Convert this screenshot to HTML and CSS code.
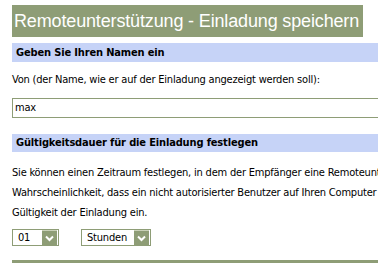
FILE: index.html
```html
<!DOCTYPE html>
<html>
<head>
<meta charset="utf-8">
<link rel="stylesheet" href="styles.css">
</head>
<body>
<div class="page">
  <div class="title">Remoteunterstützung - Einladung speichern</div>
  <div class="section-head">Geben Sie Ihren Namen ein</div>
  <p class="label">Von (der Name, wie er auf der Einladung angezeigt werden soll):</p>
  <div class="input">max</div>
  <div class="section-head second">Gültigkeitsdauer für die Einladung festlegen</div>
  <p class="text">Sie können einen Zeitraum festlegen, in dem der Empfänger eine Remoteunterstützungsverbindung herstellen kann. Verringern Sie die<br>Wahrscheinlichkeit, dass ein nicht autorisierter Benutzer auf Ihren Computer zugreift, und geben Sie eine kurze<br>Gültigkeit der Einladung ein.</p>
  <div class="selects">
    <div class="select small"><span class="val">01</span><span class="btn"><svg width="9" height="7" viewBox="0 0 9 7"><path d="M1 1.5 L4.5 5 L8 1.5" fill="none" stroke="#fff" stroke-width="2"/></svg></span></div>
    <div class="select wide"><span class="val">Stunden</span><span class="btn"><svg width="9" height="7" viewBox="0 0 9 7"><path d="M1 1.5 L4.5 5 L8 1.5" fill="none" stroke="#fff" stroke-width="2"/></svg></span></div>
  </div>
  <div class="rule"></div>
</div>
</body>
</html>
```
FILE: styles.css
```css
html, body {
  margin: 0;
  padding: 0;
  background: #fff;
  overflow: hidden;
}
.page {
  width: 560px;
  padding: 5px 0 0 12px;
  font-family: "DejaVu Sans Condensed", "DejaVu Sans", sans-serif;
  font-size: 11px;
  letter-spacing: -0.2px;
  color: #000;
}
.title {
  display: inline-block;
  background: #8e9d76;
  color: #fff;
  font-family: "Liberation Sans", Arial, sans-serif;
  font-size: 18px;
  letter-spacing: -0.15px;
  line-height: 32px;
  height: 32px;
  padding: 0 4px 0 2px;
  white-space: nowrap;
}
.section-head {
  margin-top: 6px;
  background: #c6d3f7;
  height: 19px;
  line-height: 19px;
  padding-left: 4px;
  font-weight: bold;
  font-size: 11px;
  letter-spacing: -0.15px;
}
.section-head.second {
  margin-top: 16px;
  height: 18px;
  line-height: 18px;
}
.label {
  margin: 0;
  padding-top: 9px;
  line-height: 18px;
  white-space: nowrap;
}
.input {
  margin-top: 9px;
  height: 18px;
  line-height: 18px;
  border: 1px solid #8e9d76;
  padding-left: 2px;
}
.text {
  margin: 0;
  padding-top: 11px;
  line-height: 20px;
  white-space: nowrap;
}
.selects {
  display: flex;
  gap: 22px;
  margin-top: 6px;
}
.select {
  display: flex;
  align-items: center;
  justify-content: space-between;
  height: 15px;
  border: 1px solid #8e9d76;
  padding: 0 1px 0 0;
}
.select.small { width: 44px; }
.select.wide { width: 67px; }
.val { padding-left: 5px; }
.btn {
  width: 15px;
  height: 15px;
  background: #8e9d76;
  box-sizing: border-box;
  border-top: 1px solid #c9d1b8;
  display: flex;
  align-items: center;
  justify-content: center;
}
.rule {
  margin-top: 14px;
  height: 3px;
  background: #8e9d76;
}
```
